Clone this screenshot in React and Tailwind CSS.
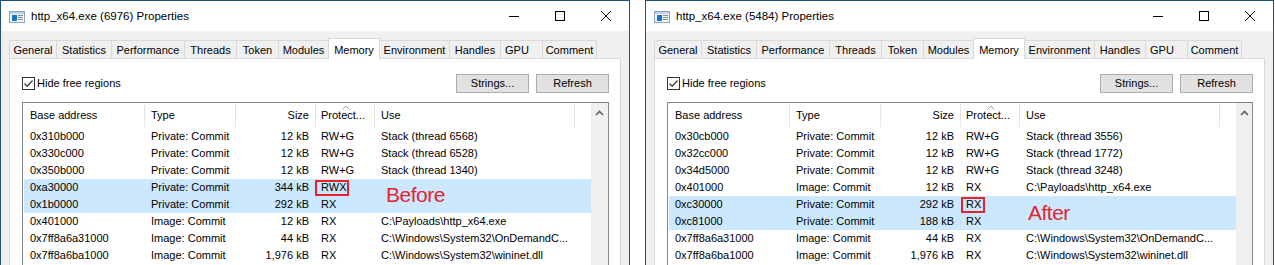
import React from "react";

const TABS = [
  { label: "General", w: "w-[48px]" },
  { label: "Statistics", w: "w-[55px]" },
  { label: "Performance", w: "w-[73px]" },
  { label: "Threads", w: "w-[52px]" },
  { label: "Token", w: "w-[42px]" },
  { label: "Modules", w: "w-[50px]" },
  { label: "Memory", w: "w-[52px]", active: true },
  { label: "Environment", w: "w-[70px]" },
  { label: "Handles", w: "w-[51px]" },
  { label: "GPU", w: "w-[42px]", left: true },
  { label: "Comment", w: "w-[54px]" },
];

const before = {
  pid: 6976,
  rows: [
    ["0x310b000", "Private: Commit", "12 kB", "RW+G", "Stack (thread 6568)"],
    ["0x330c000", "Private: Commit", "12 kB", "RW+G", "Stack (thread 6528)"],
    ["0x350b000", "Private: Commit", "12 kB", "RW+G", "Stack (thread 1340)"],
    ["0xa30000", "Private: Commit", "344 kB", "RWX", "", "sel"],
    ["0x1b0000", "Private: Commit", "292 kB", "RX", "", "sel"],
    ["0x401000", "Image: Commit", "12 kB", "RX", "C:\\Payloads\\http_x64.exe"],
    ["0x7ff8a6a31000", "Image: Commit", "44 kB", "RX", "C:\\Windows\\System32\\OnDemandC..."],
    ["0x7ff8a6ba1000", "Image: Commit", "1,976 kB", "RX", "C:\\Windows\\System32\\wininet.dll"],
  ],
  boxRow: 3,
  boxClass: "left-[291px] w-[34px]",
  label: "Before",
  labelClass: "left-[363px] top-[81px]",
};

const after = {
  pid: 5484,
  rows: [
    ["0x30cb000", "Private: Commit", "12 kB", "RW+G", "Stack (thread 3556)"],
    ["0x32cc000", "Private: Commit", "12 kB", "RW+G", "Stack (thread 1772)"],
    ["0x34d5000", "Private: Commit", "12 kB", "RW+G", "Stack (thread 3248)"],
    ["0x401000", "Image: Commit", "12 kB", "RX", "C:\\Payloads\\http_x64.exe"],
    ["0xc30000", "Private: Commit", "292 kB", "RX", "", "sel"],
    ["0xc81000", "Private: Commit", "188 kB", "RX", "", "sel"],
    ["0x7ff8a6a31000", "Image: Commit", "44 kB", "RX", "C:\\Windows\\System32\\OnDemandC..."],
    ["0x7ff8a6ba1000", "Image: Commit", "1,976 kB", "RX", "C:\\Windows\\System32\\wininet.dll"],
  ],
  boxRow: 4,
  boxClass: "left-[292px] w-[24px]",
  label: "After",
  labelClass: "left-[360px] top-[99px]",
};

function AppIcon() {
  return (
    <svg width="16" height="12" viewBox="0 0 16 12" className="shrink-0">
      <rect x="0.5" y="0.5" width="15" height="11" fill="#f4f7fb" stroke="#8da2b8" />
      <rect x="1" y="1" width="14" height="2" fill="#c5d3e2" />
      <rect x="3" y="4" width="5" height="6" fill="#1874d2" />
      <rect x="9" y="4" width="5" height="1" fill="#7d8fa3" />
      <rect x="9" y="6" width="5" height="1" fill="#7d8fa3" />
      <rect x="9" y="8" width="5" height="1" fill="#7d8fa3" />
    </svg>
  );
}

function CaptionButtons() {
  return (
    <div className="flex h-full items-center">
      <div className="w-[46px] flex justify-center">
        <svg width="10" height="10" viewBox="0 0 10 10">
          <line x1="0" y1="5.5" x2="10" y2="5.5" stroke="#000" strokeWidth="1" />
        </svg>
      </div>
      <div className="w-[46px] flex justify-center">
        <svg width="10" height="10" viewBox="0 0 10 10">
          <rect x="0.5" y="0.5" width="9" height="9" fill="none" stroke="#000" strokeWidth="1" />
        </svg>
      </div>
      <div className="w-[46px] flex justify-center">
        <svg width="10" height="10" viewBox="0 0 10 10">
          <path d="M0 0 L10 10 M10 0 L0 10" stroke="#000" strokeWidth="1" />
        </svg>
      </div>
    </div>
  );
}

function Tabs() {
  return (
    <div className="flex items-end h-[20px] shrink-0">
      {TABS.map((t, i) =>
        t.active ? (
          <div
            key={t.label}
            className={`${t.w} h-[21px] -mb-px -ml-px relative z-10 bg-white border border-b-0 border-[#d9d9d9] flex items-start justify-center pt-[3px]`}
          >
            {t.label}
          </div>
        ) : (
          <div
            key={t.label}
            className={`${t.w} h-[18px] pt-px bg-[#f0f0f0] border-t border-r border-[#d9d9d9] ${
              i === 0 ? "border-l" : ""
            } flex items-center ${t.left ? "justify-start pl-[4px]" : "justify-center"}`}
          >
            {t.label}
          </div>
        )
      )}
    </div>
  );
}

function MemoryList({ data }) {
  return (
    <div className="relative mt-[9px] border border-[#828790] bg-white flex h-[200px]">
      <div className="w-[568px]">
        {/* header */}
        <div className="flex h-[25px]">
          <div className="w-[122px] my-px border-r border-[#e5e5e5] pl-[7px] flex items-center">Base address</div>
          <div className="w-[91px] my-px border-r border-[#e5e5e5] pl-[6px] flex items-center">Type</div>
          <div className="w-[80px] my-px border-r border-[#e5e5e5] pr-[6px] flex items-center justify-end">Size</div>
          <div className="relative w-[59px] my-px border-r border-[#e5e5e5] pl-[5px] flex items-center">
            <svg width="8" height="5" viewBox="0 0 8 5" className="absolute left-[26px] top-[1px]">
              <path d="M0.5 4.5 L4 1 L7.5 4.5" fill="none" stroke="#9aa3ad" strokeWidth="1" />
            </svg>
            Protect...
          </div>
          <div className="w-[200px] my-px border-r border-[#e5e5e5] pl-[6px] flex items-center">Use</div>
        </div>
        {data.rows.map((r, i) => (
          <div
            key={i}
            className={`relative ml-px w-[567px] h-[17px] flex items-center ${r[5] ? "bg-[#cce8ff]" : ""}`}
          >
            <div className="w-[121px] pl-[6px] whitespace-nowrap">{r[0]}</div>
            <div className="w-[91px] pl-[6px] whitespace-nowrap">{r[1]}</div>
            <div className="w-[80px] pr-[7px] text-right whitespace-nowrap">{r[2]}</div>
            <div className="w-[59px] pl-[5px] whitespace-nowrap">{r[3]}</div>
            <div className="flex-1 pl-[6px] whitespace-nowrap">{r[4]}</div>
            {i === data.boxRow && (
              <div className={`absolute top-px h-[16px] border-2 border-[#e8222d] ${data.boxClass}`} />
            )}
          </div>
        ))}
      </div>
      <div className="flex-1" />
      <div className="w-[17px] bg-[#f0f0f0] flex justify-center pt-[7px]">
        <svg width="9" height="6" viewBox="0 0 9 6">
          <path d="M1 5 L4.5 1.5 L8 5" fill="none" stroke="#606060" strokeWidth="1.6" />
        </svg>
      </div>
      <div
        className={`absolute text-[21px] leading-none tracking-[-0.5px] text-[#e8222d] ${data.labelClass}`}
      >
        {data.label}
      </div>
    </div>
  );
}

function PropertiesWindow({ data, width }) {
  return (
    <div className={`${width} h-[360px] shrink-0 border border-[#20517a] flex flex-col bg-[#f0f0f0]`}>
      <div className="h-[30px] shrink-0 bg-white flex items-center justify-between">
        <div className="flex items-center pl-[8px] pt-px gap-[6px] text-[11.5px]">
          <AppIcon />
          <span>http_x64.exe ({data.pid}) Properties</span>
        </div>
        <CaptionButtons />
      </div>
      <div className="flex-1 flex flex-col px-[8px] pt-[7px]">
        <Tabs />
        <div className="flex-1 bg-white border border-[#d9d9d9] pl-[12px] pr-[11px] pt-[15px]">
          <div className="flex items-center justify-between h-[19px]">
            <label className="flex items-center gap-[2px]">
              <span className="w-[13px] h-[13px] border border-[#333333] bg-white flex items-center justify-center">
                <svg width="11" height="11" viewBox="0 0 11 11">
                  <path d="M1.5 5.5 L4.2 8.3 L9.5 2.5" fill="none" stroke="#444" strokeWidth="1.3" />
                </svg>
              </span>
              Hide free regions
            </label>
            <div className="flex gap-[7px]">
              <button className="w-[73px] h-[19px] bg-[#e1e1e1] border border-[#adadad] flex items-center justify-center">
                Strings...
              </button>
              <button className="w-[73px] h-[19px] bg-[#e1e1e1] border border-[#adadad] flex items-center justify-center">
                Refresh
              </button>
            </div>
          </div>
          <MemoryList data={data} />
        </div>
      </div>
    </div>
  );
}

export default function App() {
  return (
    <div
      className="w-[1275px] h-[265px] overflow-hidden bg-white flex gap-[15px] text-[11px] text-black"
      style={{ fontFamily: '"Liberation Sans", Arial, sans-serif' }}
    >
      <PropertiesWindow data={before} width="w-[630px]" />
      <PropertiesWindow data={after} width="w-[629px]" />
    </div>
  );
}
